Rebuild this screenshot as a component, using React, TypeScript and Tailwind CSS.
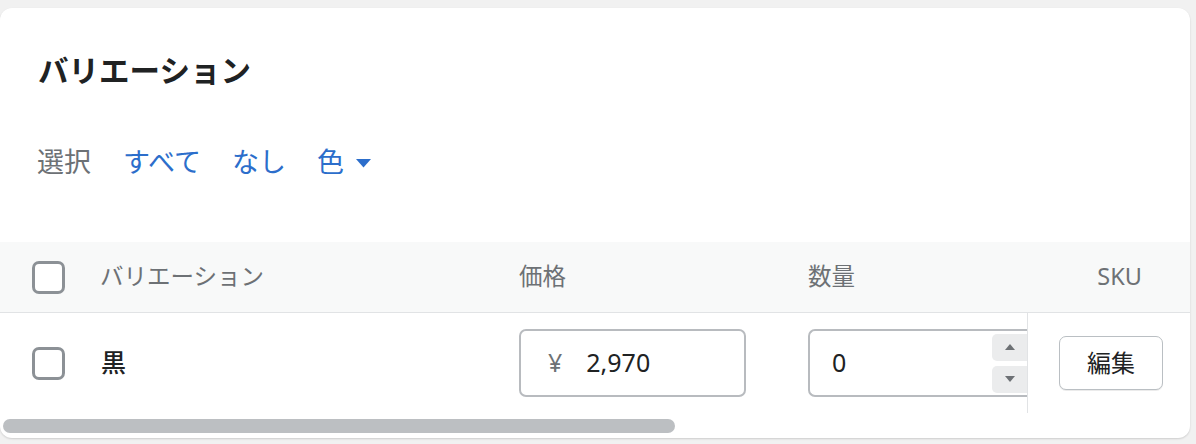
import React from "react";

const font = { fontFamily: '"Noto Sans", "Noto Sans CJK JP", sans-serif' };

function Checkbox() {
  return <span className="block h-[33px] w-[33px] shrink-0 rounded-[7px] border-[3px] border-[#8c9196] bg-white" />;
}

export default function App() {
  return (
    <div className="h-[444px] w-[1196px] overflow-hidden bg-[#f1f1f1] pt-2" style={font}>
      <div className="h-[430px] w-[1190px] overflow-hidden rounded-xl bg-white shadow-[0_1px_2px_rgba(0,0,0,0.15)]">
        {/* Heading */}
        <h2 className="pl-[38px] pt-[42px] text-[30.5px] font-bold leading-[40px] text-[#202223]">バリエーション</h2>

        {/* Select line */}
        <div className="mt-[54px] flex items-center pl-[37px] text-[27px] leading-[36px]">
          <span className="text-[#6d7175]">選択</span>
          <button className="ml-[32px] text-[#2c6ecb]">すべて</button>
          <button className="ml-[31px] text-[#2c6ecb]">なし</button>
          <button className="ml-[31px] flex items-center text-[#2c6ecb]">
            色
            <svg className="ml-[12px] mt-[2px]" width="15" height="9" viewBox="0 0 15 9">
              <path d="M0 0h15L7.5 8.5z" fill="#2c6ecb" />
            </svg>
          </button>
        </div>

        {/* Table header */}
        <div className="mt-[62px] flex h-[71px] items-center border-b border-[#e1e3e5] bg-[#f8f9f9] text-[23.5px] text-[#6d7175]">
          <div className="flex w-[519px] items-center pl-[32px]">
            <Checkbox />
            <span className="ml-[35px]">バリエーション</span>
          </div>
          <div className="w-[289px]">価格</div>
          <div className="w-[219px]">数量</div>
          <div className="w-[163px] pr-[48px] text-right">SKU</div>
        </div>

        {/* Row */}
        <div className="flex h-[100px] items-center">
          <div className="flex w-[519px] items-center pl-[32px]">
            <Checkbox />
            <span className="ml-[36px] text-[25px] font-medium text-[#202223]">黒</span>
          </div>
          <div className="w-[289px]">
            <div className="flex h-[68px] w-[227px] items-center rounded-[7px] border-2 border-[#b8bbbf] text-[25px] text-[#202223]">
              <span className="ml-[27px] text-[#6d7175]">¥</span>
              <span className="ml-[24px]">2,970</span>
            </div>
          </div>
          <div className="w-[219px]">
            <div className="flex h-[68px] w-[219px] items-center justify-between rounded-l-[7px] border-y-2 border-l-2 border-[#b8bbbf] text-[25px] text-[#202223]">
              <span className="ml-[22px]">0</span>
              <div className="flex flex-col gap-[5px]">
                <span className="flex h-[27px] w-[35px] items-center justify-center rounded-l-[5px] bg-[#ebeced]">
                  <svg width="10" height="6" viewBox="0 0 10 6"><path d="M0 6h10L5 0z" fill="#6d7175" /></svg>
                </span>
                <span className="flex h-[27px] w-[35px] items-center justify-center rounded-l-[5px] bg-[#ebeced]">
                  <svg width="10" height="6" viewBox="0 0 10 6"><path d="M0 0h10L5 6z" fill="#6d7175" /></svg>
                </span>
              </div>
            </div>
          </div>
          <div className="flex h-full w-[163px] items-center border-l border-[#e1e3e5] pl-[31px]">
            <button className="h-[54px] w-[104px] rounded-[7px] border border-[#babfc3] bg-white text-[24px] text-[#202223] shadow-[0_1px_0_rgba(0,0,0,0.08)]">
              編集
            </button>
          </div>
        </div>

        {/* Horizontal scrollbar */}
        <div className="mt-[6px] h-[14px] w-[672px] translate-x-[3px] rounded-full bg-[#bcbfc2]" />
      </div>
    </div>
  );
}
